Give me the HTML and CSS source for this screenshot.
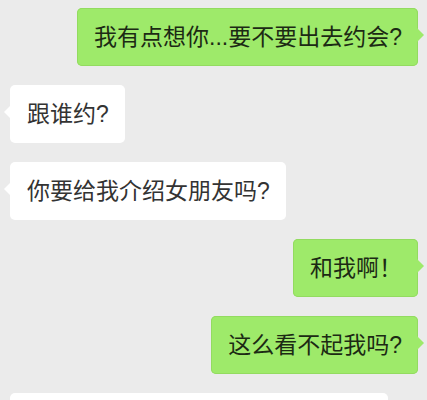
FILE: index.html
```html
<!DOCTYPE html>
<html lang="zh-CN">
<head>
<meta charset="utf-8">
<link rel="stylesheet" href="styles.css">
</head>
<body>
<div class="chat">
  <div class="row me"><div class="bubble green">我有点想你...要不要出去约会?</div></div>
  <div class="row them"><div class="bubble white">跟谁约?</div></div>
  <div class="row them"><div class="bubble white">你要给我介绍女朋友吗?</div></div>
  <div class="row me"><div class="bubble green">和我啊！</div></div>
  <div class="row me"><div class="bubble green">这么看不起我吗?</div></div>
  <div class="row them"><div class="bubble white wide">&nbsp;</div></div>
</div>
</body>
</html>
```
FILE: styles.css
```css
html, body {
  margin: 0;
  padding: 0;
  background: #ebebeb;
  height: 100%;
  overflow: hidden;
}
.chat {
  display: flex;
  flex-direction: column;
  gap: 19px;
  padding-top: 8px;
  font-family: "Liberation Sans", "Noto Sans CJK SC", sans-serif;
}
.row {
  display: flex;
}
.row.me {
  justify-content: flex-end;
  padding-right: 9px;
}
.row.them {
  justify-content: flex-start;
  padding-left: 10px;
}
.bubble {
  position: relative;
  height: 58px;
  box-sizing: border-box;
  display: flex;
  align-items: center;
  padding: 0 16px 0 17px;
  font-size: 23px;
  line-height: 1;
  border-radius: 5px;
  white-space: nowrap;
}
.green {
  background: #9eea6a;
  color: #1c2a14;
  box-shadow: inset 0 0 0 1px #93db60;
}
.white {
  background: #ffffff;
  color: #333333;
}
.wide {
  width: 378px;
}
.green::after {
  content: "";
  position: absolute;
  right: -6px;
  top: 20px;
  border-top: 7px solid transparent;
  border-bottom: 7px solid transparent;
  border-left: 7px solid #9eea6a;
}
.white::after {
  content: "";
  position: absolute;
  left: -6px;
  top: 20px;
  border-top: 7px solid transparent;
  border-bottom: 7px solid transparent;
  border-right: 7px solid #ffffff;
}
```
